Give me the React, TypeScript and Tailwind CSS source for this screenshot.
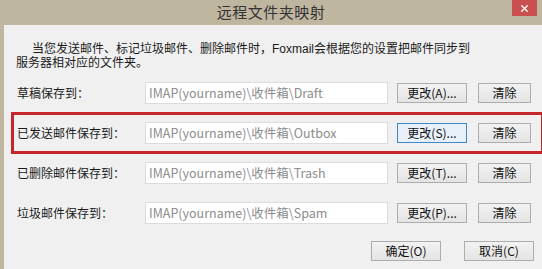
import { X } from "lucide-react";

const font = { fontFamily: '"Noto Sans CJK SC", "Noto Sans", sans-serif' };
const paraFont = { fontFamily: '"Liberation Sans", "Noto Sans CJK SC", sans-serif' };

const rows = [
    { label: "草稿保存到：", path: "Draft", key: "A" },
    { label: "已发送邮件保存到：", path: "Outbox", key: "S", focused: true, marked: true },
    { label: "已删除邮件保存到：", path: "Trash", key: "T" },
    { label: "垃圾邮件保存到：", path: "Spam", key: "P" },
];

function Button({ children, width, focused }: { children: React.ReactNode; width: string; focused?: boolean }) {
    return (
        <button
            className={`${width} h-[20px] flex items-center justify-center text-[12px] leading-none text-[#111] border ${
                focused ? "border-[#3c8ac9] bg-[#e8f1fa]" : "border-[#adadad] bg-gradient-to-b from-[#f2f2f2] to-[#e4e4e4]"
            }`}
        >
            {children}
        </button>
    );
}

export default function App() {
    return (
        <div className="w-[542px] h-[269px] flex flex-col bg-[#bfb6a0] overflow-hidden" style={font}>
            {/* Title bar */}
            <div className="relative h-[25px] shrink-0 flex items-center justify-center">
                <span className="text-[15px] text-[#333] tracking-[0.5px]">远程文件夹映射</span>
                <div className="absolute top-0 right-[5px] w-[25px] h-[16px] bg-[#c9504f] flex items-center justify-center">
                    <X className="w-[11px] h-[11px] text-white" strokeWidth={3} />
                </div>
            </div>

            {/* Body */}
            <div className="flex-1 ml-[4px] bg-[#f0f0f0] flex flex-col">
                <p className="mt-[17px] pl-[12px] text-[12px] leading-[14px] text-[#1a1a1a] indent-[16px]" style={paraFont}>
                    当您发送邮件、标记垃圾邮件、删除邮件时，Foxmail会根据您的设置把邮件同步到
                    <br />
                    服务器相对应的文件夹。
                </p>

                <div className="mt-[3px] flex flex-col">
                    {rows.map((row) => (
                        <div key={row.key} className="relative h-[40px] flex items-center pl-[13px]">
                            {row.marked && (
                                <div className="absolute left-[7px] right-[-2px] top-[-1px] bottom-[-1px] border-[3px] border-[#c4262b] pointer-events-none" />
                            )}
                            <span className="w-[128px] text-[12px] text-[#1a1a1a]">{row.label}</span>
                            <div className="w-[243px] h-[22px] bg-white border border-[#dcdcdc] flex items-center pl-[3px] text-[12.5px] text-[#8c8c8c]">
                                {"IMAP(yourname)\\收件箱\\" + row.path}
                            </div>
                            <div className="ml-[9px]">
                                <Button width="w-[70px]" focused={row.focused}>
                                    更改({row.key})...
                                </Button>
                            </div>
                            <div className="ml-[11px]">
                                <Button width="w-[53px]">清除</Button>
                            </div>
                        </div>
                    ))}
                </div>

                <div className="mt-[8px] flex justify-end gap-[23px] pr-[8px]">
                    <Button width="w-[70px]">确定(O)</Button>
                    <Button width="w-[70px]">取消(C)</Button>
                </div>
            </div>
        </div>
    );
}
